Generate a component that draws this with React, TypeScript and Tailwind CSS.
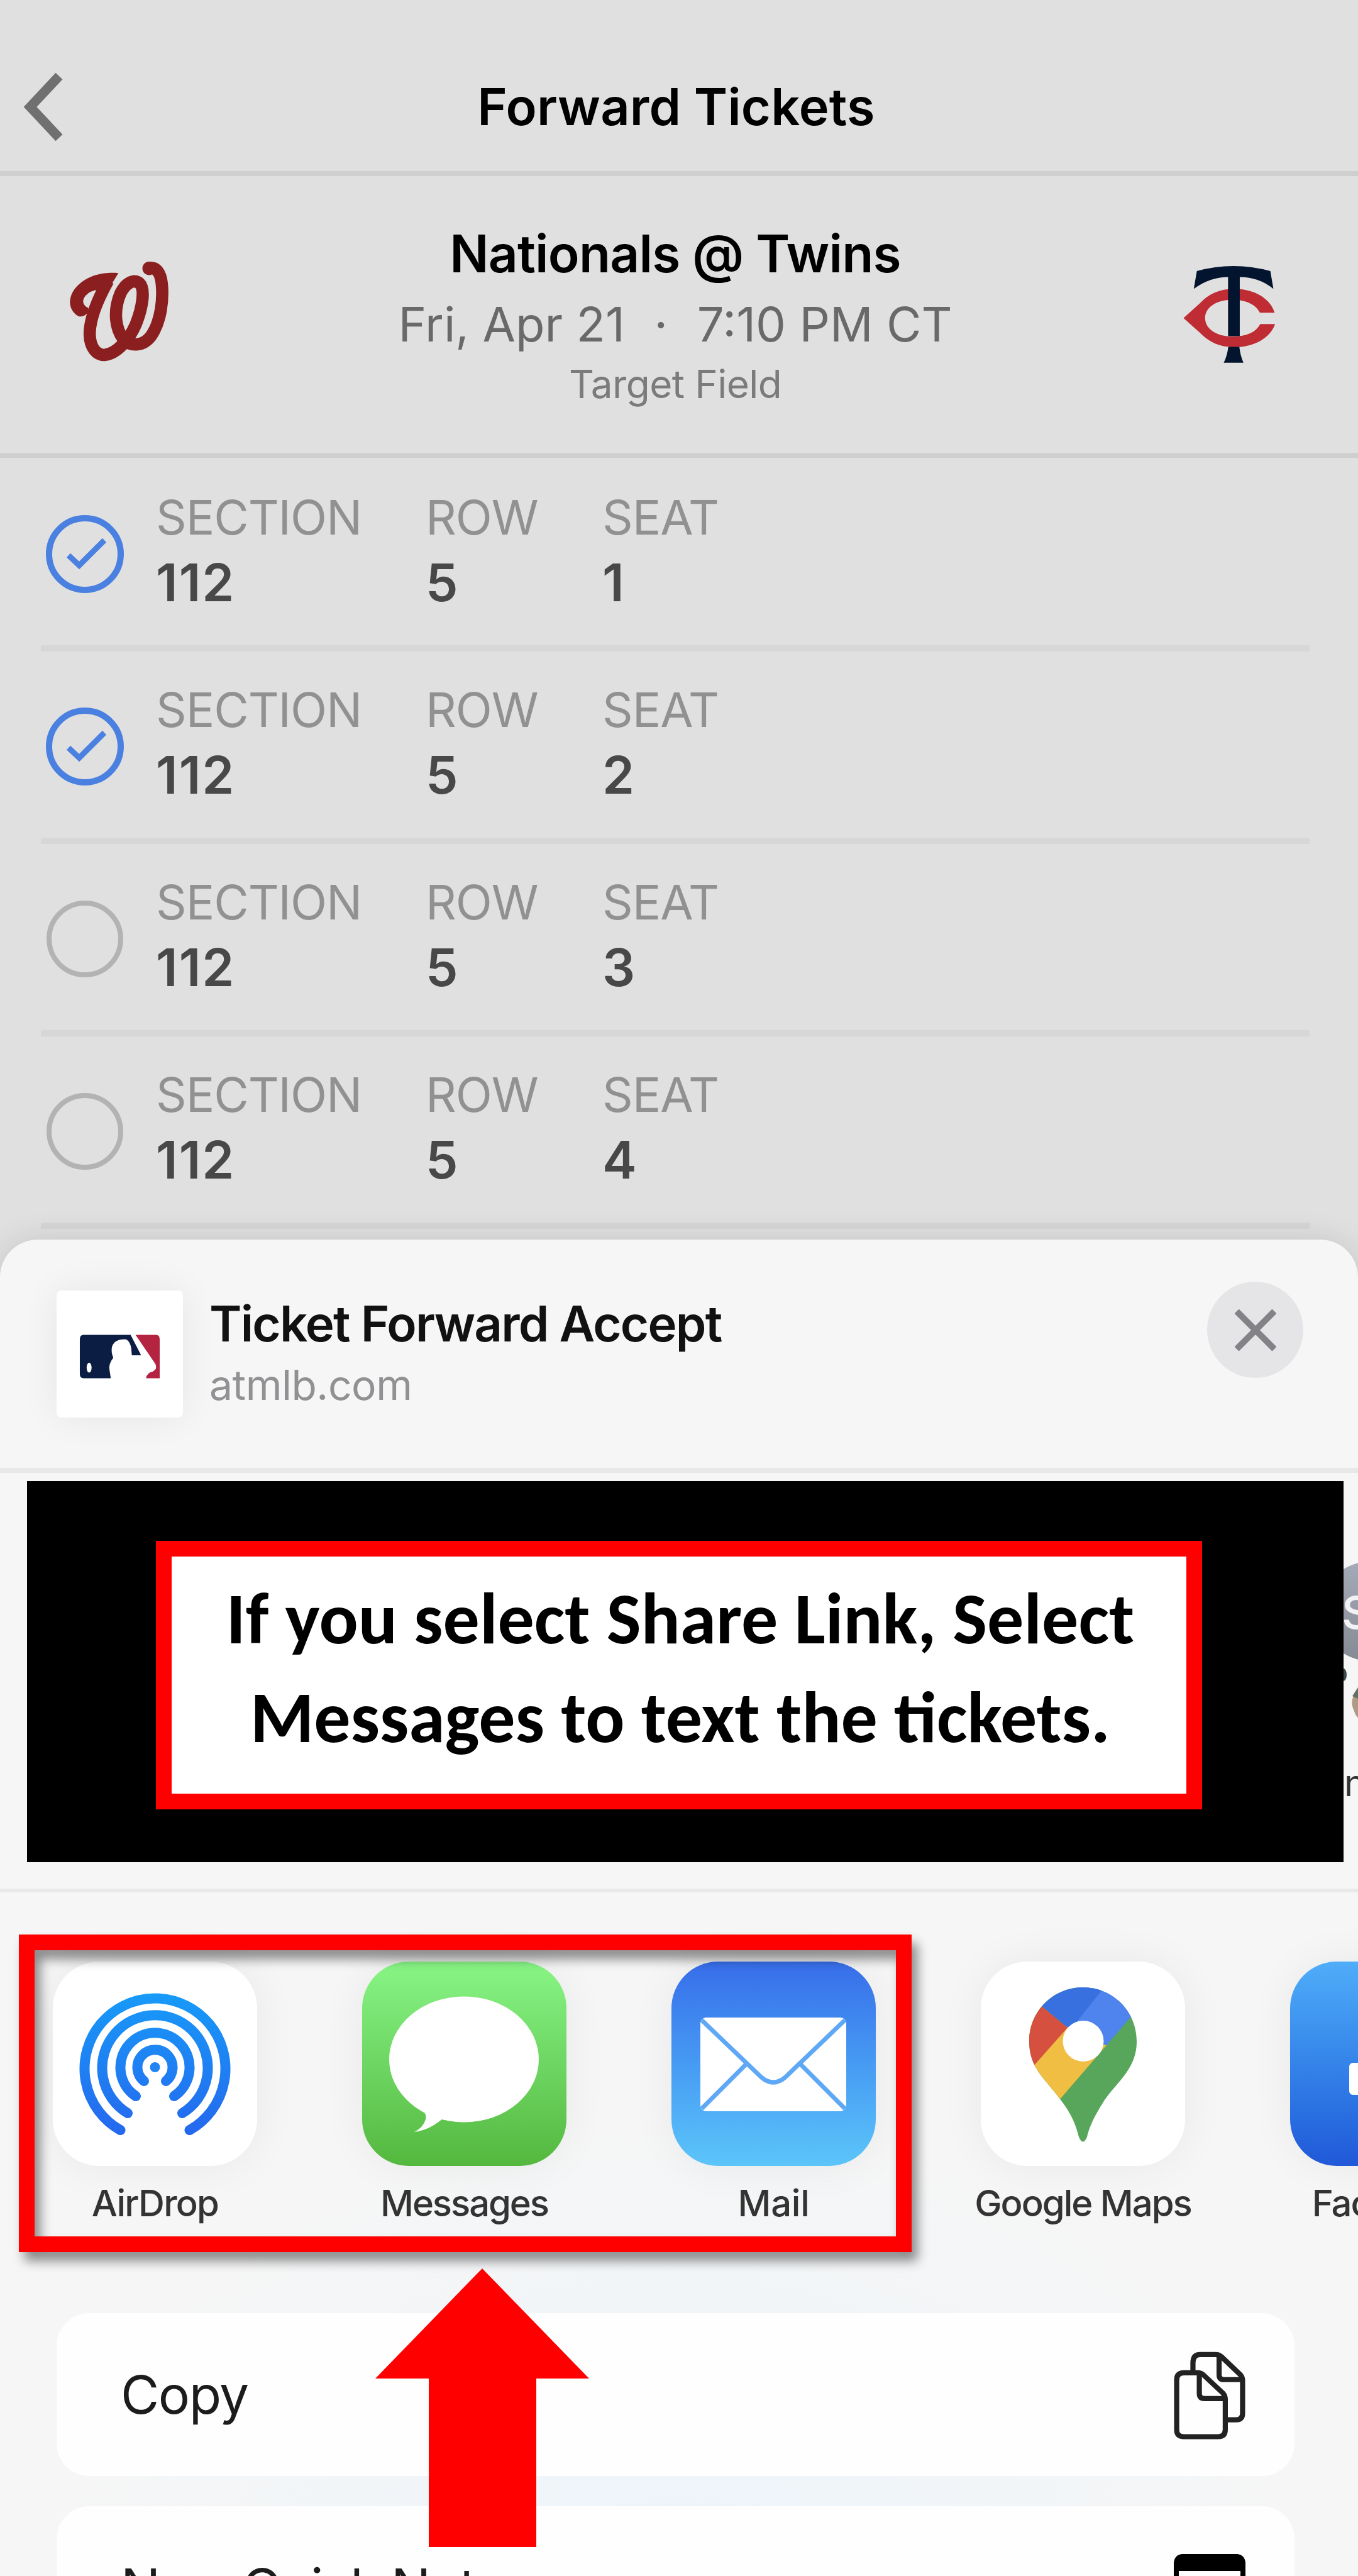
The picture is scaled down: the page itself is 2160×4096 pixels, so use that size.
import React from 'react';

const seats = [
  { section: '112', row: '5', seat: '1', checked: true },
  { section: '112', row: '5', seat: '2', checked: true },
  { section: '112', row: '5', seat: '3', checked: false },
  { section: '112', row: '5', seat: '4', checked: false },
];

function NationalsLogo() {
  return (
    <svg viewBox="0 0 720 720" className="w-[235px] h-[235px] shrink-0" fill="none">
      <path fill="#8b1f1f" d="M338 163C255 156 170 178 121 246C86 300 104 352 143 373C176 382 200 350 190 332C158 316 160 286 188 264C205 250 225 245 242 245L275 275L300 225Z" />
      <path stroke="#8b1f1f" strokeWidth="60" d="M288 200C232 300 198 390 198 462C200 528 232 562 270 562C332 556 392 484 422 415C456 330 470 240 440 212C412 190 372 212 348 262C316 338 318 425 362 485C400 525 462 518 498 468C545 400 558 290 549 212C543 158 520 136 496 138" />
      <circle cx="488" cy="140" r="33" fill="#8b1f1f" />
    </svg>
  );
}

function TwinsLogo() {
  return (
    <svg viewBox="0 0 720 720" className="w-[235px] h-[235px] shrink-0">
      <path fill="#bf2c34" d="M516 356C496 290 420 240 320 240C245 240 195 265 150 312Q108 350 72 382Q108 415 150 452C195 498 245 524 320 524C420 524 496 476 518 411H446C425 450 380 472 312 472C225 472 177 430 177 382C177 334 225 293 312 293C380 293 425 318 444 356Z" />
      <path fill="#03142f" d="M137 153Q315 104 495 153L510 240Q440 182 346 182V470H289V182Q200 182 122 240Z" />
      <path fill="#03142f" d="M290 522H344Q348 562 364 600H268Q286 562 290 522Z" />
    </svg>
  );
}

function CheckCircle({ checked }: { checked: boolean }) {
  return (
    <svg viewBox="0 0 124 124" className="w-[124px] h-[124px]" fill="none">
      <circle cx="62" cy="62" r="57" stroke={checked ? '#4a80e0' : '#b3b3b3'} strokeWidth={checked ? 10 : 8} />
      {checked && <path d="M36 64L53 80L93 40" stroke="#4a80e0" strokeWidth="9" />}
    </svg>
  );
}

function MlbLogo() {
  return (
    <svg viewBox="0 0 132 72" className="w-[130px] h-[72px]">
      <path fill="#0b1d42" d="M8 1H84L101 34H86L85 22Q82 8 74 8Q58 8 54 20Q52 28 56 38Q48 48 50 58L52 71H8Q2 71 2 64V8Q2 1 8 1Z" />
      <ellipse cx="17" cy="54" rx="4" ry="8" fill="#fff" />
      <path fill="#b4233f" d="M92 1H125Q131 1 131 8V71H109Q110 62 120 60Q128 56 124 48Z" />
    </svg>
  );
}

function AirDropIcon() {
  return (
    <svg viewBox="0 0 325 325" className="w-full h-full" fill="none" stroke="url(#ad)" strokeWidth="16">
      <defs>
        <linearGradient id="ad" gradientUnits="userSpaceOnUse" x1="0" y1="48" x2="0" y2="275">
          <stop offset="0" stopColor="#179bf8" />
          <stop offset="1" stopColor="#2568ee" />
        </linearGradient>
      </defs>
      <path d="M107.5 268A112 112 0 1 1 217.500 268" strokeLinecap="round" />
      <path d="M119 241A84 84 0 1 1 206 241" strokeLinecap="round" />
      <path d="M132 214A55 55 0 1 1 193 214" strokeLinecap="round" />
      <path d="M145 190A28 28 0 1 1 180 190" strokeLinecap="round" />
      <circle cx="162.500" cy="168" r="8" fill="#2283f3" stroke="none" />
    </svg>
  );
}

function MessagesIcon() {
  return (
    <svg viewBox="0 0 325 325" className="w-full h-full" fill="#fff">
      <ellipse cx="162" cy="155.500" rx="119" ry="100" />
      <path d="M88 230Q104 240 101 251Q97 264 83 271Q108 268 130 248Z" />
    </svg>
  );
}

function MailIcon() {
  return (
    <svg viewBox="0 0 325 325" className="w-full h-full">
      <rect x="46" y="89" width="232" height="149" rx="9" fill="#fff" />
      <path d="M48 93L143 184Q162 200 181 184L276 93M119 163L48 234M205 163L276 234" fill="none" stroke="#5fa8f5" strokeWidth="7" />
    </svg>
  );
}

function MapsIcon() {
  return (
    <svg viewBox="0 0 325 325" className="w-full h-full">
      <clipPath id="pin">
        <path d="M162.500 41C210 41 248 79 248 127C248 170 218 190 197 220C180 247 173 262 169 279Q162.500 294 156 279C152 262 145 243 127 220C104 188 77 170 77 127C77 79 115 41 162.500 41Z" />
      </clipPath>
      <g clipPath="url(#pin)">
        <rect width="325" height="325" fill="#58a65c" />
        <path fill="#4f83ed" d="M150 20H300L237 90L180 156L140 120Z" />
        <path fill="#3870df" d="M40 20H213L154 94L163 126L60 40Z" />
        <path fill="#efbe42" d="M136 103L50 207V307L200 133L163 126Z" />
        <path fill="#d5503e" d="M60 41L138 105L84 166L50 207Z" />
      </g>
      <circle cx="163" cy="126.500" r="32.500" fill="#fff" />
    </svg>
  );
}

function FacebookIcon() {
  return (
    <svg viewBox="0 0 325 325" className="w-full h-full">
      <rect x="94" y="161" width="60" height="51" rx="6" fill="#fff" />
    </svg>
  );
}

const apps = [
  { name: 'AirDrop', icon: <AirDropIcon />, tile: 'bg-white', label: 'tracking-[-1.7px]' },
  { name: 'Messages', icon: <MessagesIcon />, tile: 'bg-linear-to-b from-[#88f585] to-[#54b83e]', label: 'tracking-[-2.1px]' },
  { name: 'Mail', icon: <MailIcon />, tile: 'bg-linear-to-b from-[#386dea] to-[#5cc5f9]', label: 'tracking-[-0.3px]' },
  { name: 'Google Maps', icon: <MapsIcon />, tile: 'bg-white', label: 'tracking-[-2px]' },
  { name: 'Facebook', icon: <FacebookIcon />, tile: 'bg-linear-to-b from-[#50adf9] to-[#2158d8]', label: 'tracking-[-2px]' },
];

function CopyIcon() {
  return (
    <svg viewBox="147 120 348 432" className="w-[114px] h-[142px]" fill="none" stroke="#222" strokeWidth="25" strokeLinejoin="round">
      <path d="M240 222V180Q240 140 275 140H350Q368 140 380 152L468 236Q481 249 481 266V425Q481 457 449 457H400" />
      <path d="M367 148V238Q367 262 391 262H476" />
      <path d="M161 264Q161 229 196 229H262Q281 229 293 241L386 328Q397 340 397 358V505Q397 539 363 539H196Q161 539 161 505Z" />
      <path d="M271 236V330Q271 354 295 354H390" />
    </svg>
  );
}

function NoteIcon() {
  return (
    <svg viewBox="0 0 114 114" className="w-[114px] h-[114px]">
      <rect x="4" y="4" width="106" height="106" rx="12" fill="none" stroke="#000" strokeWidth="8" />
      <path d="M0 27V16Q0 0 16 0H98Q114 0 114 16V27Z" />
    </svg>
  );
}

function SeatCell({ label, value, className }: { label: string; value: string; className: string }) {
  return (
    <div className={className}>
      <div className="text-[76px] leading-[90px] tracking-[-1.1px] text-[#919191]">{label}</div>
      <div className="mt-[10px] text-[82px] leading-[100px] tracking-[2px] font-semibold text-[#484848]">{value}</div>
    </div>
  );
}

export default function App() {
  return (
    <div className="relative w-[2160px] h-[4096px] overflow-hidden bg-[#e0e0e0] font-['Inter',sans-serif] text-black whitespace-nowrap">
      <header className="flex h-[280px] border-b-[8px] border-[#cfcfcf] pl-[30px] pr-[119px]">
        <svg viewBox="0 0 80 272" className="w-[80px] h-[272px] shrink-0" fill="none" stroke="#707070" strokeWidth="15">
          <path d="M64 121L18 170L64 219" />
        </svg>
        <h1 className="flex-1 pt-[120px] text-center text-[81px] leading-[100px] tracking-[0.2px] font-semibold">Forward Tickets</h1>
      </header>

      <section className="flex h-[448px] border-b-[8px] border-[#cfcfcf] pt-[74px] pl-[78px] pr-[66px]">
        <div className="pt-[27px]"><NationalsLogo /></div>
        <div className="flex-1 pr-[24px] text-center">
          <div className="text-[82px] leading-[100px] tracking-[-0.8px] font-semibold">Nationals @ Twins</div>
          <div className="mt-[11px] flex justify-center text-[76px] leading-[100px] text-[#696969]">
            <span>Fri, Apr 21</span>
            <span className="w-[115px]">·</span>
            <span>7:10 PM CT</span>
          </div>
          <div className="mt-[6px] text-[62px] leading-[80px] tracking-[-0.6px] text-[#7b7b7b]">Target Field</div>
        </div>
        <div className="pt-[27px]"><TwinsLogo /></div>
      </section>

      <main className="pt-[2px] pl-[65px] pr-[77px]">
        {seats.map((s) => (
          <div key={s.seat} className="flex h-[306px] border-b-[10px] border-[#d7d7d7] pl-[8px]">
            <div className="w-[175px] pt-[89px]"><CheckCircle checked={s.checked} /></div>
            <SeatCell label="SECTION" value={s.section} className="w-[429px] pt-[47px]" />
            <SeatCell label="ROW" value={s.row} className="w-[281px] pt-[47px]" />
            <SeatCell label="SEAT" value={s.seat} className="pt-[47px]" />
          </div>
        ))}
      </main>

      <div className="mt-[17px] h-[2125px] overflow-hidden rounded-t-[60px] bg-[#f6f6f6] bg-[radial-gradient(ellipse_1000px_700px_at_50%_98%,#edf4fa,#f6f6f6)] shadow-[0_0_50px_rgba(0,0,0,0.12)]">
        <div className="flex h-[371px] border-b-[8px] border-[#e8e8e8] pt-[67px] pl-[90px] pr-[87px]">
          <div className="mt-[14px] flex h-[202px] w-[201px] items-center justify-center rounded-[8px] bg-white pt-[8px] pr-[2px] shadow-[0_0_60px_rgba(0,0,0,0.07)]">
            <MlbLogo />
          </div>
          <div className="flex-1 pt-[17px] pl-[42px]">
            <div className="text-[78px] leading-[100px] tracking-[-1.8px] font-semibold text-[#111]">Ticket Forward Accept</div>
            <div className="mt-[7px] text-[66px] leading-[80px] tracking-[-0.5px] text-[#919194]">atmlb.com</div>
          </div>
          <button className="flex h-[153px] w-[153px] items-center justify-center rounded-full bg-[#e5e5e7]">
            <svg viewBox="0 0 66 66" className="w-[66px] h-[66px]" stroke="#828287" strokeWidth="10">
              <path d="M3 3L63 63M63 3L3 63" />
            </svg>
          </button>
        </div>

        <div className="flex h-[667px] border-b-[6px] border-[#e9e9ea] pt-[13px] pl-[43px]">
          <div className="flex h-[606px] w-[2094px] bg-black pt-[95px] pl-[205px]">
            <div className="h-[427px] w-[1664px] border-[25px] border-[#fe0000] bg-white pt-[20px] pl-[4px] text-center font-['Carlito','Lato',sans-serif] text-[116px] leading-[157px] font-bold">
              <div>If you select Share Link, Select</div>
              <div>Messages to text the tickets.</div>
            </div>
          </div>
          {/* next contact, cut off by the screen edge */}
          <svg viewBox="0 0 23 606" className="w-[23px] h-[606px]">
            <defs>
              <linearGradient id="av" x1="0" y1="0" x2="0" y2="1">
                <stop offset="0" stopColor="#a5aab8" />
                <stop offset="1" stopColor="#858b93" />
              </linearGradient>
            </defs>
            <circle cx="42" cy="207" r="79" fill="url(#av)" />
            <text x="-3" y="235" fontSize="72" fontWeight="500" fill="#f2f2f5">S</text>
            <ellipse cx="0" cy="308" rx="5" ry="10" fill="#3c4a4c" />
            <path d="M23 330Q11 345 14 358Q20 376 23 376Z" fill="#b09a86" />
            <path d="M23 328L14 342L23 346Z" fill="#5f7064" />
            <text x="1" y="501" fontSize="58" fill="#333">n</text>
          </svg>
        </div>

        <div className="flex gap-[167px] pt-[110px] pl-[84px]">
          {apps.map((a) => (
            <div key={a.name} className="flex w-[325px] shrink-0 flex-col items-center">
              <div className={'h-[325px] w-[325px] overflow-hidden rounded-[74px] shadow-[0_0_70px_rgba(0,0,0,0.06)] ' + a.tile}>{a.icon}</div>
              <div className={'mt-[24px] text-[58px] leading-[70px] font-medium text-[#333] ' + a.label}>{a.name}</div>
            </div>
          ))}
        </div>

        <div className="mt-[140px] flex flex-col gap-[48px] pl-[90px] pr-[101px]">
          <div className="flex h-[259px] items-center justify-between rounded-[52px] bg-[#fefefe] pl-[102px] pr-[78px] text-[84px] leading-[100px] tracking-[-1.5px] text-[#1c1c1c]">
            <span>Copy</span>
            <CopyIcon />
          </div>
          <div className="flex h-[259px] items-center justify-between rounded-[52px] bg-[#fefefe] pl-[102px] pr-[78px] text-[84px] leading-[100px] tracking-[-2.5px] text-[#1c1c1c]">
            <span>New Quick Note</span>
            <div className="pt-[6px]"><NoteIcon /></div>
          </div>
        </div>
      </div>

      {/* callout frame and arrow drawn over the share sheet */}
      <div className="absolute top-[3076px] left-[30px] h-[505px] w-[1420px] border-[25px] border-[#fe0000] drop-shadow-[9px_14px_9px_rgba(0,0,0,0.45)]" />
      <svg viewBox="0 0 340 443" className="absolute top-[3607px] left-[597px] w-[340px] h-[443px]" fill="#fe0000">
        <path d="M170 0L340 175H256V443H85V175H0Z" />
      </svg>
    </div>
  );
}
